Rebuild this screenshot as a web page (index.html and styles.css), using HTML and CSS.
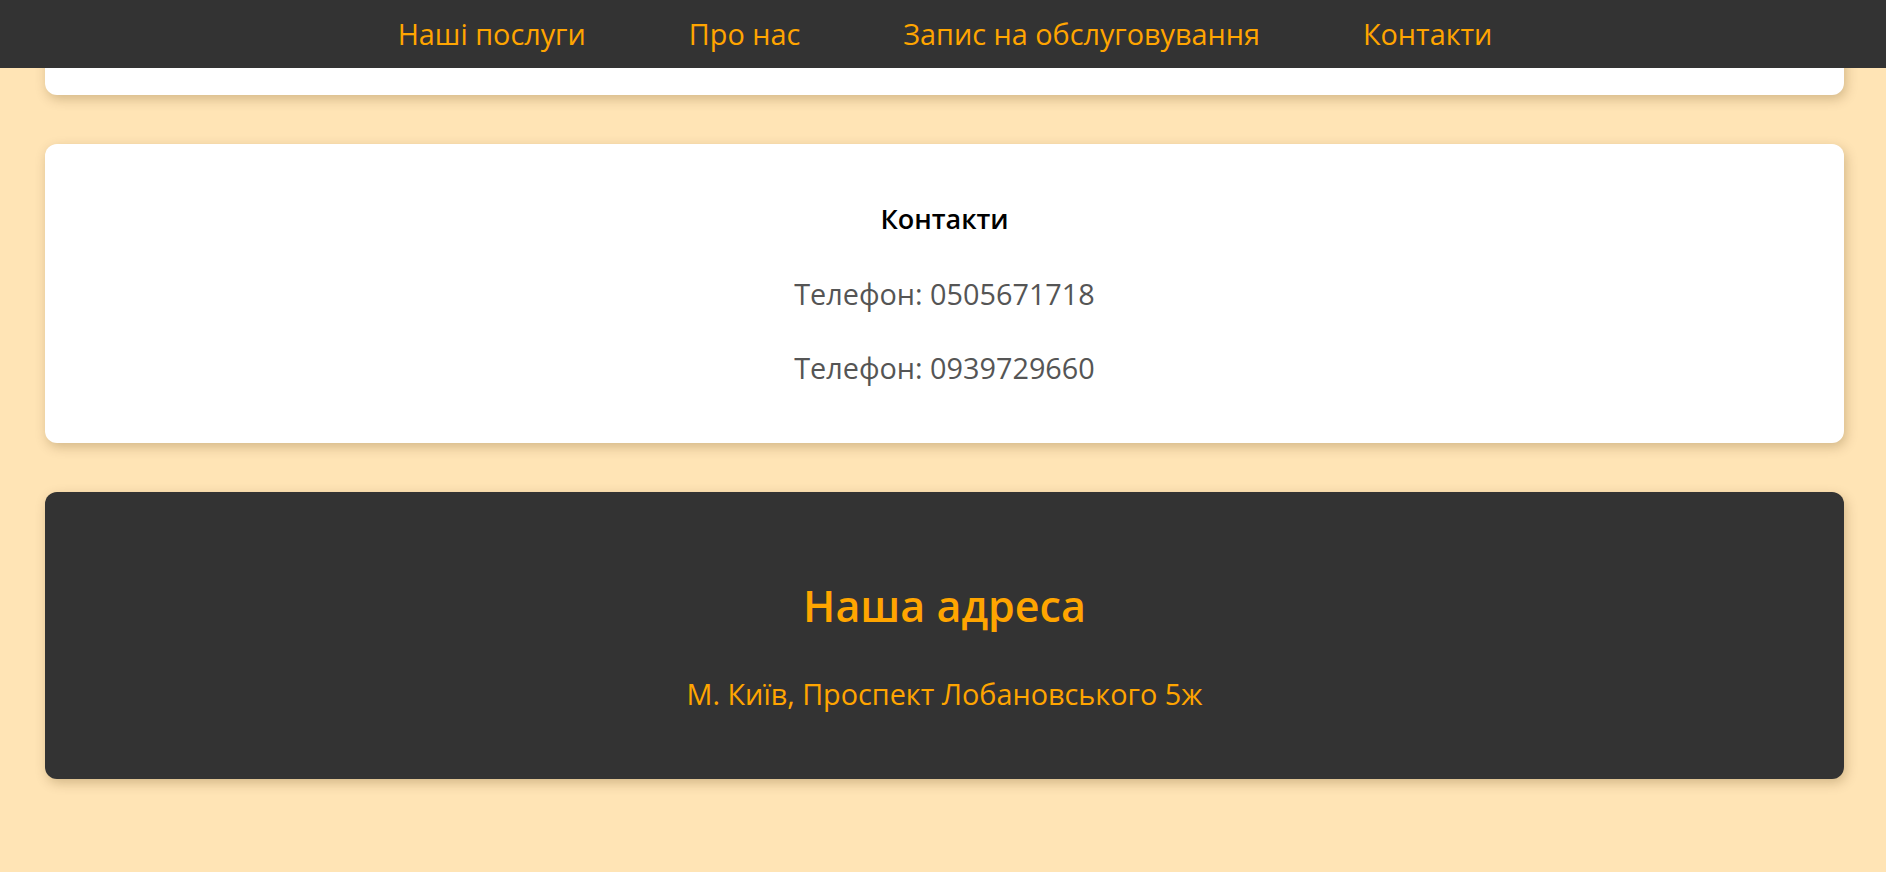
FILE: index.html
```html
<!DOCTYPE html>
<html lang="uk">
<head>
<meta charset="utf-8">
<title>Контакти</title>
<link rel="stylesheet" href="styles.css">
</head>
<body>
<nav class="topnav">
  <a class="topnav__link" href="#services">Наші послуги</a>
  <a class="topnav__link" href="#about">Про нас</a>
  <a class="topnav__link" href="#booking">Запис на обслуговування</a>
  <a class="topnav__link" href="#contacts">Контакти</a>
</nav>
<main class="page">
  <section class="card card--prev"></section>
  <section class="card card--contacts" id="contacts">
    <h3 class="card__title">Контакти</h3>
    <p class="card__line">Телефон: 0505671718</p>
    <p class="card__line">Телефон: 0939729660</p>
  </section>
  <footer class="card card--address">
    <h2 class="address__title">Наша адреса</h2>
    <p class="address__text">М. Київ, Проспект Лобановського 5ж</p>
  </footer>
</main>
</body>
</html>
```
FILE: styles.css
```css
* { box-sizing: border-box; }
html, body {
  margin: 0;
  padding: 0;
}
body {
  background: #ffe4b5;
  font-family: "Open Sans", "Noto Sans", sans-serif;
  height: 872px;
  overflow: hidden;
}
.topnav {
  position: fixed;
  top: 0;
  left: 0;
  right: 0;
  height: 68px;
  background: #333333;
  display: flex;
  justify-content: center;
  align-items: center;
  gap: 103px;
  padding-left: 4px;
  z-index: 10;
}
.topnav__link {
  color: #ffa500;
  text-decoration: none;
  font-size: 28.8px;
  line-height: 40px;
}
.page {
  display: flex;
  flex-direction: column;
  gap: 49px;
  padding: 0 42px 0 45px;
}
.card {
  background: #ffffff;
  border-radius: 12px;
  box-shadow: 2px 4px 12px rgba(80, 50, 0, 0.25);
  text-align: center;
}
.card--prev {
  height: 95px;
  border-radius: 0 0 12px 12px;
}
.card--contacts {
  height: 299px;
  padding: 55px 0;
  display: flex;
  flex-direction: column;
  gap: 34.5px;
}
.card__title {
  margin: 0;
  font-size: 27px;
  font-weight: 600;
  line-height: 40px;
  color: #000000;
}
.card__line {
  margin: 0;
  font-size: 28.8px;
  line-height: 40px;
  color: #555555;
}
.card--address {
  background: #333333;
  height: 287px;
  padding: 84px 0 65px;
  display: flex;
  flex-direction: column;
  gap: 38px;
}
.address__title {
  margin: 0;
  font-size: 43px;
  font-weight: 600;
  line-height: 60px;
  color: #ffa500;
}
.address__text {
  margin: 0;
  font-size: 28.8px;
  line-height: 40px;
  color: #ffa500;
}
```
